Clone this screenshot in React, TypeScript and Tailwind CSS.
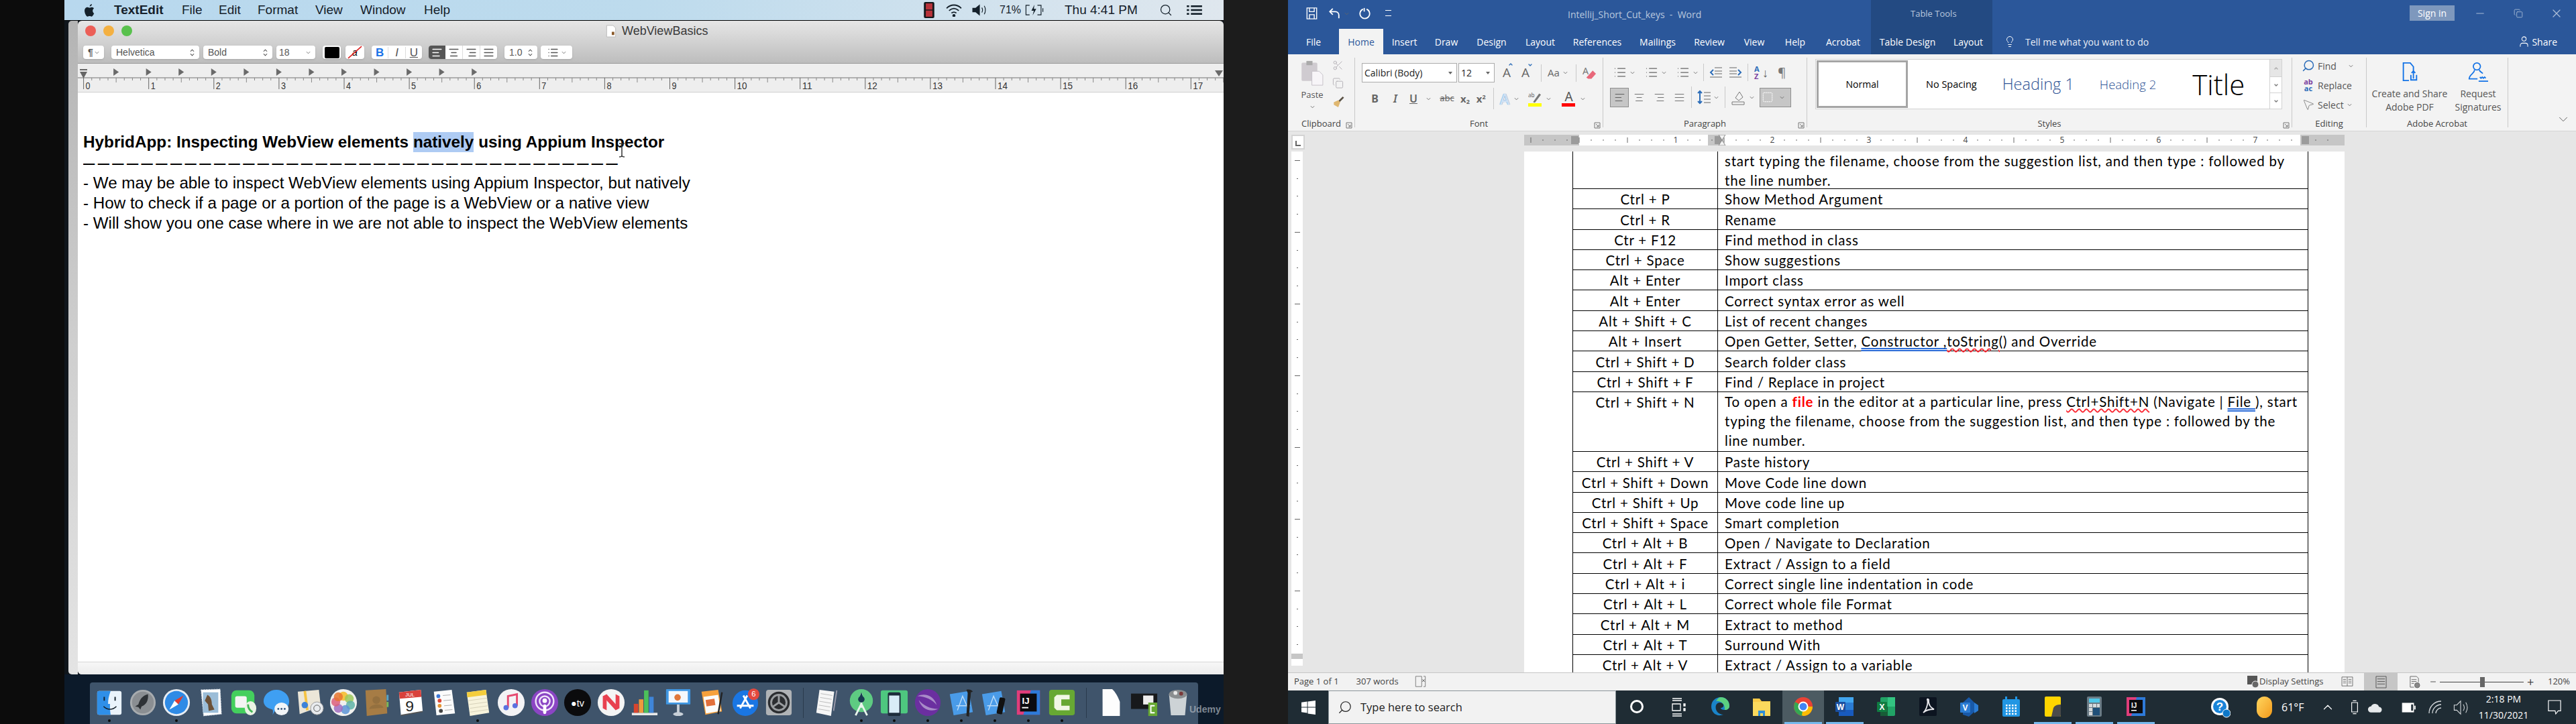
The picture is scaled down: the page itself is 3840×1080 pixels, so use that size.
import React from 'react';
import {
  AlignCenter, AlignJustify, AlignLeft, AlignRight, ChevronDown, ChevronUp, Copy, Lightbulb, List, Minus, MousePointer2,
  Scissors, Search, Square, User, X,
} from 'lucide-react';

const Caret = ({ className = '' }: { className?: string }) => (
  <svg viewBox="0 0 8 5" className={`w-[7px] h-[5px] ${className}`}><path d="M1 1l3 3 3-3" fill="none" stroke="#666" strokeWidth="1" /></svg>
);

const Updown = () => (
  <svg viewBox="0 0 8 14" className="w-[7px] h-[13px]"><path d="M1 5l3-3 3 3M1 9l3 3 3-3" fill="none" stroke="#444" strokeWidth="1.2" /></svg>
);

/* ---------- mac side ---------- */

const macMenu = [
  { label: 'TextEdit', cls: 'w-[101px] font-bold' },
  { label: 'File', cls: 'w-[55px]' },
  { label: 'Edit', cls: 'w-[58px]' },
  { label: 'Format', cls: 'w-[86px]' },
  { label: 'View', cls: 'w-[67px]' },
  { label: 'Window', cls: 'w-[95px]' },
  { label: 'Help', cls: 'w-[50px]' },
];

const MacMenuBar = () => (
  <div className="h-[31px] shrink-0 flex items-center border-b border-black bg-gradient-to-r from-[#b8d8ee] via-[#bddbed] to-[#dfe7ee] text-[#15202a] text-[19px] font-['Liberation_Sans',Arial,sans-serif]">
    <svg viewBox="0 0 20 24" className="ml-[28px] mr-[27px] w-[19px] h-[21px]" fill="#14202a">
      <path d="M14 1c.2 2-1.600 4.300-3.800 4.200C10 3.200 11.900 1.200 14 1zM17.500 17.500c-.9 2-2.300 5-4.200 5-1.300 0-1.800-.8-3.300-.8s-2 .8-3.300.8C4.500 22.500 1.500 17 1.500 12.500 1.500 9 3.800 6.500 6.500 6.500c1.500 0 2.600 1 3.500 1s2.300-1.100 4-1c1.300.1 2.700.7 3.500 2-3.200 1.900-2.600 6.900.5 9z" />
    </svg>
    {macMenu.map((m) => (
      <span key={m.label} className={m.cls}>{m.label}</span>
    ))}
    <div className="ml-[692px] flex items-center">
      <svg viewBox="0 0 22 34" className="w-[22px] h-[24px]">
        <rect width="22" height="34" rx="3" fill="#14181c" />
        <rect x="4" y="3" width="14" height="13" fill="#b8323a" />
        <rect x="4" y="18" width="14" height="13" fill="#b8323a" />
      </svg>
      <svg viewBox="0 0 28 22" className="ml-[12px] w-[28px] h-[20px]" fill="none" stroke="#14202a" strokeWidth="2">
        <path d="M2 8c7-7 17-7 24 0M6 12c5-4.500 11-4.500 16 0M10 16c2.500-2 5.500-2 8 0" />
        <circle cx="14" cy="20" r="1.500" fill="#14202a" />
      </svg>
      <svg viewBox="0 0 24 20" className="ml-[12px] w-[24px] h-[18px]" fill="none" stroke="#14202a" strokeWidth="1.300">
        <path d="M1 7h5l6-5v16l-6-5H1z" fill="#14202a" />
        <path d="M16 6c1.500 2.500 1.500 5.500 0 8M20 3c2.500 4 2.500 10 0 14" />
      </svg>
      <span className="ml-[18px] text-[16px] w-[34px]">71%</span>
      <svg viewBox="0 0 32 20" className="ml-[2px] w-[32px] h-[18px]" fill="none" stroke="#14202a" strokeWidth="1.300">
        <path d="M8 2H2v16h6M21 2h6v16h-6" />
        <path d="M30 7v6" />
        <path d="M16 1l-5 10h4l-2 8 6-11h-4z" fill="#14202a" stroke="none" />
      </svg>
      <span className="ml-[29px] w-[109px] whitespace-nowrap">Thu 4:41 PM</span>
      <Search className="ml-[31px] w-[22px] h-[20px] text-[#14202a]" strokeWidth={1.5} />
      <svg viewBox="0 0 26 16" className="ml-[19px] w-[25px] h-[14px]" fill="#14202a">
        <rect y="0" width="4" height="3" /><rect x="7" y="0" width="19" height="3" />
        <rect y="6.500" width="4" height="3" /><rect x="7" y="6.500" width="19" height="3" />
        <rect y="13" width="4" height="3" /><rect x="7" y="13" width="19" height="3" />
      </svg>
    </div>
  </div>
);

const MacRuler = () => {
  const zero = 8.6;
  const unit = 97.1;
  const ticks = Array.from({ length: 143 }, (_, i) => i);
  return (
    <svg width="1708" height="42" className="block">
      <line x1="0" y1="21" x2="1708" y2="21" stroke="#9b9b9b" strokeWidth="1.500" />
      {ticks.map((i) => {
        const x = zero + (i * unit) / 8;
        const major = i % 8 === 0;
        const half = i % 4 === 0;
        return <line key={i} x1={x} x2={x} y1="21" y2={major ? 38 : half ? 28 : 25} stroke={major ? '#666' : '#888'} strokeWidth="1" />;
      })}
      {Array.from({ length: 18 }, (_, i) => (
        <text key={i} x={zero + i * unit + 3} y="38" fontSize="15" fill="#333" fontFamily="'Liberation Sans'" textLength={i > 9 ? 15 : 7} lengthAdjust="spacingAndGlyphs">{i}</text>
      ))}
      <path d="M3 12h11l-5.500 10z M3 8h11v2H3z" fill="#666" />
      {Array.from({ length: 12 }, (_, i) => {
        const x = zero + ((i + 1) * unit) / 2 - 4;
        return <path key={i} d={`M${x} 7l8 5.500-8 5.500z`} fill="#6a6a6a" />;
      })}
      <path d="M1695 10h12l-6 9z" fill="#6a6a6a" />
    </svg>
  );
};

const MacToolbar = () => (
  <div className="h-[64px] shrink-0 flex flex-col bg-gradient-to-b from-[#e6e6e6] to-[#bdbdbd] border-b border-[#9a9a9a]">
    <div className="h-[30px] shrink-0 flex items-center pl-[11px]">
      <div className="flex gap-[11px]">
        <span className="w-4 h-4 rounded-full bg-[#ec5f57]" />
        <span className="w-4 h-4 rounded-full bg-[#f4b041]" />
        <span className="w-4 h-4 rounded-full bg-[#59c14d]" />
      </div>
      <svg viewBox="0 0 16 20" className="ml-[706px] w-[16px] h-[19px]"><path d="M1 1h10l4 4v14H1z" fill="#fff" stroke="#bbb" /><rect x="9" y="11" width="4" height="5" fill="#8a5a2a" /></svg>
      <span className="ml-[8px] text-[18px] text-[#3a3a3a]">WebViewBasics</span>
    </div>
    <div className="mt-[7px] h-[20px] flex items-stretch pl-[8px] text-[#555] text-[14px]">
      <div className="w-[31px] rounded-[4px] bg-white shadow-sm flex items-center justify-center gap-[2px] font-bold">¶<Caret /></div>
      <div className="ml-[11px] w-[131px] rounded-[4px] bg-white shadow-sm flex items-center justify-between px-[7px]">Helvetica<Updown /></div>
      <div className="ml-[6px] w-[103px] rounded-[4px] bg-white shadow-sm flex items-center justify-between px-[7px]">Bold<Updown /></div>
      <div className="ml-[6px] w-[58px] rounded-[4px] bg-white shadow-sm flex items-center justify-between px-[4px]">18<Caret className="mr-[3px]" /></div>
      <div className="ml-[11px] w-[27px] rounded-[4px] bg-white shadow-sm flex items-center justify-center"><span className="w-[22px] h-[17px] bg-black rounded-[2px]" /></div>
      <div className="ml-[7px] w-[28px] rounded-[4px] bg-white shadow-sm flex items-center justify-center relative text-black italic">a<svg viewBox="0 0 24 18" className="absolute inset-0 w-full h-full"><path d="M3 17L21 1" stroke="#d22" strokeWidth="1.500" /></svg></div>
      <div className="ml-[11px] w-[75px] rounded-[4px] bg-white shadow-sm flex items-center text-[17px] leading-none">
        <span className="flex-1 text-center font-bold text-[#1a73e8]">B</span>
        <span className="flex-1 text-center italic border-x border-[#ddd]">I</span>
        <span className="flex-1 text-center underline">U</span>
      </div>
      <div className="ml-[10px] w-[102px] rounded-[4px] bg-white shadow-sm flex items-stretch overflow-hidden">
        <span className="flex-1 flex items-center justify-center bg-[#555]"><AlignLeft className="w-[17px] h-[17px] text-white" /></span>
        <span className="flex-1 flex items-center justify-center border-r border-[#ddd]"><AlignCenter className="w-[17px] h-[17px]" /></span>
        <span className="flex-1 flex items-center justify-center border-r border-[#ddd]"><AlignRight className="w-[17px] h-[17px]" /></span>
        <span className="flex-1 flex items-center justify-center"><AlignJustify className="w-[17px] h-[17px]" /></span>
      </div>
      <div className="ml-[11px] w-[49px] rounded-[4px] bg-white shadow-sm flex items-center justify-between px-[7px]">1.0<Updown /></div>
      <div className="ml-[5px] w-[47px] rounded-[4px] bg-white shadow-sm flex items-center justify-center gap-[4px]"><List className="w-[17px] h-[17px]" /><Caret /></div>
    </div>
  </div>
);

const dash = Array.from({ length: 37 }, () => '–').join(' ');

const MacDocument = () => (
  <div className="flex-1 relative bg-white text-black text-[24.200px] font-['Liberation_Sans',Arial,sans-serif] pl-[8px] pt-[59px]">
    <div className="h-[30px] leading-[30px] font-bold text-[24.300px] whitespace-nowrap">
      HybridApp: Inspecting WebView elements <span className="bg-[#aecbf3] inline-block h-[30px]">natively</span> using Appium Inspector
    </div>
    <div className="h-[31px] leading-[31px] text-[31px] tracking-[-2.100px] whitespace-nowrap overflow-hidden">{dash}</div>
    <div className="h-[30px] leading-[30px] whitespace-nowrap">- We may be able to inspect WebView elements using Appium Inspector, but natively</div>
    <div className="h-[30px] leading-[30px] whitespace-nowrap">- How to check if a page or a portion of the page is a WebView or a native view</div>
    <div className="h-[30px] leading-[30px] whitespace-nowrap">- Will show you one case where in we are not able to inspect the WebView elements</div>
    <svg viewBox="0 0 10 22" className="absolute left-[806px] top-[75px] w-[10px] h-[22px]" fill="none" stroke="#333" strokeWidth="1.500"><path d="M1 1c2 0 4 .5 4 2v16c0 1.500-2 2-4 2M9 1c-2 0-4 .5-4 2M9 21c-2 0-4-.5-4-2" /></svg>
    <div className="absolute left-0 right-0 bottom-0 h-[19px] border-t border-[#d6d6d6] bg-gradient-to-b from-[#f7f7f7] to-[#ececec]" />
  </div>
);

const DOCK = 'block w-[42px] h-[42px]';

const dockLeft: { node: React.ReactNode; dot?: boolean }[] = [
  { dot: true, node: <svg viewBox="0 0 44 44" className={DOCK}><rect x="3" y="4" width="38" height="37" rx="3" fill="#eaf3fb" /><path d="M3 7a3 3 0 013-3h18c-3 8-4 14-4 20h3c0 6 0 11 1 17H6a3 3 0 01-3-3z" fill="#2f8fe8" /><path d="M13 28c6 6 14 6 20 0" stroke="#15202a" strokeWidth="1.600" fill="none" /><path d="M14 13v6M31 13v6" stroke="#15202a" strokeWidth="2" /></svg> },
  { node: <svg viewBox="0 0 44 44" className={DOCK}><circle cx="22" cy="22" r="20" fill="#a8acaf" /><circle cx="22" cy="22" r="17" fill="#8a8e92" /><path d="M30 9c-9 2-13 9-15 16l-5 3 5 1 3 4 2-5c7-2 11-9 10-19z" fill="#2e3236" /></svg> },
  { dot: true, node: <svg viewBox="0 0 44 44" className={DOCK}><circle cx="22" cy="22" r="21" fill="#e8edf3" /><circle cx="22" cy="22" r="18" fill="#2f8be6" /><path d="M33 11L19 19l6 6z" fill="#e23c30" /><path d="M11 33l8-14 6 6z" fill="#fff" /></svg> },
  { node: <svg viewBox="0 0 44 44" className={DOCK}><path d="M8 2l30 -1 2 39-28 3z" fill="#fff" stroke="#c5d0dc" strokeDasharray="2 2" /><rect x="11" y="6" width="24" height="32" fill="#9bbdd8" /><path d="M18 10c6 3 7 10 7 15l4 8-9 2-1-10-5-6z" fill="#6b5138" /></svg> },
  { node: <svg viewBox="0 0 44 44" className={DOCK}><rect x="3" y="3" width="36" height="36" rx="8" fill="#44cf5d" /><rect x="9" y="12" width="18" height="18" rx="3" fill="#f4f4f4" /><ellipse cx="33" cy="31" rx="9" ry="11" fill="#e9f2e4" /><path d="M29 25c0 6 2 9 7 12" stroke="#43b456" strokeWidth="3" fill="none" /></svg> },
  { node: <svg viewBox="0 0 44 44" className={DOCK}><path d="M22 2c11 0 20 8 20 18 0 3-1 6-2 8H24l-8 13c1-3 1-6 0-8C7 31 2 26 2 20 2 10 11 2 22 2z" fill="#3f9ff2" /><ellipse cx="30" cy="32" rx="11" ry="10" fill="#f2f5f8" /><circle cx="25" cy="32" r="1.500" fill="#3a5a80" /><circle cx="30" cy="32" r="1.500" fill="#3a5a80" /><circle cx="35" cy="32" r="1.500" fill="#3a5a80" /></svg> },
  { node: <svg viewBox="0 0 44 44" className={DOCK}><path d="M3 5l33-3 3 26-33 12z" fill="#ebe6d8" /><path d="M14 4l4 30" stroke="#f5c343" strokeWidth="4" /><circle cx="14" cy="26" r="5" fill="#3d82d8" /><circle cx="33" cy="31" r="10" fill="#e9ecef" stroke="#999" /><circle cx="33" cy="31" r="5" fill="none" stroke="#555" /></svg> },
  { node: <svg viewBox="0 0 44 44" className={DOCK}><circle cx="22" cy="22" r="21" fill="#f0f0ee" /><circle cx="22" cy="12" r="7" fill="#f6c343" /><circle cx="31" cy="16" r="7" fill="#9cc95a" opacity=".85" /><circle cx="33" cy="26" r="7" fill="#5fb3a8" opacity=".85" /><circle cx="25" cy="33" r="7" fill="#5c94d6" opacity=".85" /><circle cx="14" cy="31" r="7" fill="#a06cc0" opacity=".85" /><circle cx="10" cy="21" r="7" fill="#dd5f7a" opacity=".85" /><circle cx="14" cy="13" r="7" fill="#e8762f" opacity=".85" /></svg> },
  { node: <svg viewBox="0 0 44 44" className={DOCK}><path d="M4 3l32-2 2 38-32 4z" fill="#a67c45" /><circle cx="21" cy="18" r="6" fill="#94703f" /><path d="M10 32c2-9 20-9 22-2z" fill="#94703f" /><rect x="37" y="10" width="3" height="9" fill="#58a5c7" /><rect x="37" y="21" width="3" height="8" fill="#7cb85a" /></svg> },
  { node: <svg viewBox="0 0 44 44" className={DOCK}><path d="M4 6l34-4 3 34-34 6z" fill="#fff" /><path d="M4 6l34-4 1 11-34 3z" fill="#d9413b" /><text x="14" y="13" fontSize="8" fill="#fff" fontFamily="'Liberation Sans'">JUL</text><text x="14" y="36" fontSize="24" fill="#222" fontFamily="'Liberation Sans'">9</text><path d="M7 42l34-6" stroke="#555" strokeWidth="2" /></svg> },
  { node: <svg viewBox="0 0 44 44" className={DOCK}><path d="M6 5l28-3 5 37-29 3z" fill="#fbfbfb" /><circle cx="13" cy="12" r="3" fill="#3d78d8" /><circle cx="15" cy="19" r="3" fill="#dc4a3c" /><circle cx="15" cy="27" r="3" fill="#e59434" /><circle cx="17" cy="35" r="3" fill="#444" /><path d="M20 11l12-1M21 19l12-1M22 27l12-1M23 34l12-1" stroke="#aaa" strokeWidth="1" /></svg> },
  { dot: true, node: <svg viewBox="0 0 44 44" className={DOCK}><path d="M5 6l30-4 5 36-30 5z" fill="#f7f3dc" /><path d="M5 6l30-4 1 8-30 4z" fill="#f4cd3c" /><path d="M8 19l29-4M9 25l29-4M10 31l28-4M10 37l28-4" stroke="#d5d0b8" strokeWidth="1" /></svg> },
  { node: <svg viewBox="0 0 44 44" className={DOCK}><circle cx="22" cy="22" r="21" fill="#f3f3f5" /><path d="M17 30V12l14-3v18" fill="none" stroke="#e64a70" strokeWidth="3" /><circle cx="14" cy="30" r="4" fill="#5a72e0" /><circle cx="28" cy="27" r="4" fill="#5a72e0" /></svg> },
  { node: <svg viewBox="0 0 44 44" className={DOCK}><circle cx="22" cy="22" r="21" fill="#8b45c4" /><g fill="none" stroke="#f0e4fa" strokeWidth="2.500"><circle cx="22" cy="20" r="14" /><circle cx="22" cy="20" r="8" /></g><circle cx="22" cy="19" r="3.500" fill="#fff" /><rect x="19.500" y="25" width="5" height="15" rx="2.500" fill="#fff" /></svg> },
  { node: <svg viewBox="0 0 44 44" className={DOCK}><circle cx="22" cy="22" r="21" fill="#0b0b0d" /><text x="22" y="28" textAnchor="middle" fontSize="15" fill="#fff" fontFamily="'Liberation Sans'">●tv</text></svg> },
  { node: <svg viewBox="0 0 44 44" className={DOCK}><circle cx="22" cy="22" r="21" fill="#f4f4f4" /><path d="M9 12l6-3 20 22-6 3z" fill="#e8414f" /><path d="M9 12h6v22l-6-3zM29 9l6 3v19l-6-3z" fill="#e8414f" /></svg> },
  { node: <svg viewBox="0 0 44 44" className={DOCK}><path d="M2 38h40v4H2z" fill="#e8e8e8" /><rect x="5" y="24" width="7" height="14" fill="#d8452e" /><rect x="13" y="17" width="7" height="21" fill="#ef9a3d" /><rect x="21" y="3" width="7" height="35" fill="#4cc05a" /><rect x="29" y="13" width="7" height="25" fill="#3f85d8" /></svg> },
  { node: <svg viewBox="0 0 44 44" className={DOCK}><rect x="3" y="1" width="38" height="24" rx="1" fill="#3f97e3" /><rect x="7" y="4" width="30" height="18" fill="#f4f8fc" /><circle cx="21" cy="14" r="5" fill="#e0773a" /><rect x="20" y="25" width="4" height="14" fill="#c8d0d8" /><ellipse cx="22" cy="40" rx="8" ry="3" fill="#c8d0d8" /></svg> },
  { node: <svg viewBox="0 0 44 44" className={DOCK}><path d="M6 5l26-3 6 34-26 5z" fill="#f7a13c" /><path d="M9 13l23-3 4 25-23 4z" fill="#fbfbfb" /><rect x="13" y="17" width="14" height="10" fill="#e26f3b" transform="rotate(-9 20 22)" /><path d="M38 6l-6 34" stroke="#222" strokeWidth="2.500" /></svg> },
  { node: <svg viewBox="0 0 44 44" className="block w-[42px] h-[42px]"><circle cx="22" cy="23" r="20" fill="#1a76e3" /><path d="M14 31L25 11M30 31L19 11M9 27h26" stroke="#fff" strokeWidth="3" /><circle cx="35" cy="9" r="9" fill="#e2483e" /><text x="35" y="13" textAnchor="middle" fontSize="12" fill="#fff" fontFamily="'Liberation Sans'">6</text></svg> },
  { node: <svg viewBox="0 0 44 44" className={DOCK}><rect x="2" y="2" width="40" height="40" rx="4" fill="#b0b3b6" /><circle cx="22" cy="22" r="17" fill="#2b2d30" /><circle cx="22" cy="22" r="12" fill="none" stroke="#9a9da0" strokeWidth="3" /><path d="M22 22V10M22 22l10 7M22 22l-10 7" stroke="#9a9da0" strokeWidth="3" /></svg> },
];

const dockMiddle: { node: React.ReactNode; dot?: boolean }[] = [
  { dot: false, node: <svg viewBox="0 0 44 44" className={DOCK}><path d="M9 2l23 3-5 38L4 38z" fill="#f6f6f6" /><path d="M11 8l18 3M10 14l18 3M9 20l18 3M8 26l18 3M7 32l18 3" stroke="#bbb" strokeWidth="1" /><path d="M36 3l-5 32" stroke="#99a" strokeWidth="2" /></svg> },
  { dot: true, node: <svg viewBox="0 0 44 44" className={DOCK}><circle cx="22" cy="19" r="18" fill="#5ecb82" /><path d="M22 8v22M13 42l9-18 9 18" stroke="#e8f4ec" strokeWidth="3" fill="none" /><circle cx="22" cy="17" r="5" fill="#183a50" /><path d="M22 6l-4 11h8z" fill="#183a50" /></svg> },
  { dot: true, node: <svg viewBox="0 0 44 44" className={DOCK}><rect x="1" y="3" width="42" height="36" rx="3" fill="#4ec77f" /><rect x="12" y="6" width="20" height="37" rx="3" fill="#1d2d3c" /><rect x="14" y="11" width="16" height="27" fill="#d8ecf7" /></svg> },
  { dot: true, node: <svg viewBox="0 0 44 44" className={DOCK}><ellipse cx="22" cy="22" rx="20" ry="21" fill="#6b2fa0" /><path d="M6 12c12-6 26 0 30 14-6-8-18-14-30-14zM38 32c-12 6-26 0-30-14 6 8 18 14 30 14z" fill="#a98cc9" /></svg> },
  { dot: true, node: <svg viewBox="0 0 44 44" className={DOCK}><path d="M4 9l30-5 6 33-30 5z" fill="#4a9be8" /><path d="M16 34L24 12l8 18M14 27h22" stroke="#bcdcf8" strokeWidth="1.500" fill="none" /><path d="M30 2c4-1 8 0 10 3l-3 1-3 38-4-1 2-36z" fill="#222" /></svg> },
  { dot: true, node: <svg viewBox="0 0 44 44" className={DOCK}><path d="M2 9l30-5 6 33-30 5z" fill="#4a9be8" /><path d="M12 34L20 12l8 18M10 27h22" stroke="#bcdcf8" strokeWidth="1.500" fill="none" /><rect x="27" y="14" width="9" height="26" rx="2" fill="#111" transform="rotate(12 31 27)" /></svg> },
  { dot: true, node: <svg viewBox="0 0 44 44" className={DOCK}><rect x="4" y="3" width="36" height="38" fill="#e03d7a" /><path d="M26 3h14v38H14z" fill="#2e7ad8" /><rect x="9" y="8" width="26" height="28" fill="#0b0b0f" /><text x="12" y="24" fontSize="14" fontWeight="700" fill="#fff" fontFamily="'Liberation Sans'">IJ</text><rect x="12" y="29" width="10" height="2" fill="#fff" /></svg> },
  { dot: true, node: <svg viewBox="0 0 44 44" className={DOCK}><rect x="2" y="2" width="40" height="40" rx="4" fill="#67a833" /><path d="M14 10h20v7H21v10h13v7H14l-4-4V14z" fill="#f1f7e6" /></svg> },
];

const dockRight: { node: React.ReactNode }[] = [
  { node: <svg viewBox="0 0 44 44" className={DOCK}><path d="M9 1h15c5 4 10 14 12 20v22H9z" fill="#fdfdfd" /></svg> },
  { node: <svg viewBox="0 0 44 44" className={DOCK}><rect x="1" y="8" width="41" height="24" fill="#17191b" /><rect x="20" y="11" width="16" height="14" fill="#eee" /><rect x="28" y="22" width="14" height="21" fill="#67a833" /><path d="M38 27h-6v11h6" stroke="#fff" strokeWidth="2" fill="none" /></svg> },
  { node: <svg viewBox="0 0 44 44" className={DOCK}><path d="M8 9h28l-3 33H11z" fill="#cdd3d6" /><ellipse cx="22" cy="9" rx="14" ry="7" fill="#8a8e90" /><circle cx="18" cy="7" r="3" fill="#e8e8e8" /><circle cx="27" cy="8" r="3" fill="#7a3a3a" /></svg> },
];

const DockItem = ({ node, dot }: { node: React.ReactNode; dot?: boolean }) => (
  <div className="w-[49.900px] flex flex-col items-center pt-[9px]">
    {node}
    <span className={`mt-[4px] w-[4px] h-[4px] rounded-full ${dot ? 'bg-[#0b0b0b]' : 'bg-transparent'}`} />
  </div>
);

const DockSep = () => (
  <div className="w-[23px] flex justify-center pt-[8px]"><span className="w-px h-[45px] bg-[#2a3a4c]" /></div>
);

const Dock = () => (
  <div className="h-[74px] shrink-0 relative bg-[#0c1a2a] pl-[38px] pt-[12px]">
    <div className="w-[1652px] h-[62px] flex pl-[4px] rounded-t-[4px] bg-[#3f546b]">
      {dockLeft.map((d, i) => <DockItem key={i} {...d} />)}
      <DockSep />
      {dockMiddle.map((d, i) => <DockItem key={i} {...d} />)}
      <DockSep />
      {dockRight.map((d, i) => <DockItem key={i} {...d} />)}
    </div>
    <span className="absolute left-[1677px] top-[42px] text-[14px] font-bold text-[#aeb6be] opacity-70">Udemy</span>
  </div>
);

const MacSide = () => (
  <div className="w-[1728px] shrink-0 h-full flex flex-col font-['Liberation_Sans',Arial,sans-serif]">
    <MacMenuBar />
    <div className="flex-1 min-h-0 flex bg-[#10161c]">
      <div className="w-[6px] shrink-0" />
      <div className="w-[14px] shrink-0 rounded-tl-[5px] rounded-bl-[5px] bg-gradient-to-b from-[#b4b4b4] via-[#cfcfcf] to-[#e4e4e4]" />
      <div className="flex-1 flex flex-col rounded-t-[6px] rounded-bl-[6px] overflow-hidden">
        <MacToolbar />
        <div className="h-[43px] shrink-0 bg-[#eeeeee] border-b border-[#cfcfcf]"><MacRuler /></div>
        <MacDocument />
      </div>
    </div>
    <Dock />
  </div>
);

/* ---------- word side ---------- */

const wordTabs = [
  { label: 'File', cls: 'w-[76px] text-white' },
  { label: 'Home', cls: 'w-[66px] bg-[#f3f3f3] text-[#2b579a]' },
  { label: 'Insert', cls: 'w-[63px] text-white' },
  { label: 'Draw', cls: 'w-[62px] text-white' },
  { label: 'Design', cls: 'w-[73px] text-white' },
  { label: 'Layout', cls: 'w-[72px] text-white' },
  { label: 'References', cls: 'w-[98px] text-white' },
  { label: 'Mailings', cls: 'w-[82px] text-white' },
  { label: 'Review', cls: 'w-[72px] text-white' },
  { label: 'View', cls: 'w-[62px] text-white' },
  { label: 'Help', cls: 'w-[60px] text-white' },
  { label: 'Acrobat', cls: 'w-[83px] text-white' },
  { label: 'Table Design', cls: 'w-[109px] text-white bg-[#234a82]' },
  { label: 'Layout', cls: 'w-[72px] text-white bg-[#234a82]' },
];

const WordTitleBar = () => (
  <div className="h-[43px] shrink-0 flex items-start bg-[#2b579a] text-[#b9c8de] text-[14px] relative">
    <svg viewBox="0 0 18 20" className="ml-[27px] mt-[11px] w-[17px] h-[18px]" fill="none" stroke="#fff" strokeWidth="1.500"><path d="M1 1h16v18H1z" /><path d="M5 1v6h8V1M5 19v-7h8v7" /></svg>
    <svg viewBox="0 0 20 20" className="ml-[16px] mt-[11px] w-[19px] h-[18px]" fill="none" stroke="#fff" strokeWidth="2"><path d="M7 2L2 7l5 5" /><path d="M2 7h9c4 0 6 3 6 6v5" /></svg>
    <Caret className="ml-[5px] mt-[18px]" />
    <svg viewBox="0 0 20 20" className="ml-[14px] mt-[11px] w-[19px] h-[18px]" fill="none" stroke="#fff" strokeWidth="2"><path d="M13 3a8 8 0 11-6 0" /><path d="M9 1v6" /></svg>
    <span className="ml-[21px] mt-[15px] w-[9px] h-[9px] border-t border-b border-white" />
    <span className="absolute left-[417px] top-[11px] text-[14px] whitespace-pre">Intellij_Short_Cut_keys  -  Word</span>
    <div className="absolute left-[869px] top-0 w-[181px] h-[43px] bg-[#234a82] flex pl-[59px] pt-[11px] text-[13px]">Table Tools</div>
    <span className="absolute left-[1672px] top-[8px] w-[67px] h-[23px] bg-[#7e98bd] flex items-center justify-center text-white text-[14px]">Sign in</span>
    <Minus className="absolute left-[1768px] top-[11px] w-[18px] h-[18px] text-[#a9bbd6]" strokeWidth={1.500} />
    <Copy className="absolute left-[1827px] top-[12px] w-[14px] h-[16px] text-[#a9bbd6]" strokeWidth={1.500} />
    <X className="absolute left-[1881px] top-[10px] w-[20px] h-[20px] text-[#a9bbd6]" strokeWidth={1.500} />
  </div>
);

const WordTabs = () => (
  <div className="h-[38px] shrink-0 flex items-stretch bg-[#2b579a] text-[14px]">
    {wordTabs.map((t, i) => (
      <div key={i} className={`flex items-center justify-center ${t.cls}`}>{t.label}</div>
    ))}
    <Lightbulb className="ml-[17px] self-center w-[18px] h-[22px] text-white" strokeWidth={1.300} />
    <span className="ml-[14px] self-center text-[14px] text-[#e9eef6]">Tell me what you want to do</span>
    <div className="ml-auto mr-[28px] self-center flex items-center text-white gap-[2px]">
      <User className="w-[19px] h-[22px]" strokeWidth={1.300} />
      <span>Share</span>
    </div>
  </div>
);

const GroupLabel = ({ children, launcher }: { children: React.ReactNode; launcher?: boolean }) => (
  <div className="absolute left-0 right-0 -bottom-[5px] h-[20px] flex items-center justify-center text-[13px] text-[#444]">
    {children}
    {launcher && (
      <svg viewBox="0 0 10 10" className="absolute right-[3px] bottom-[3px] w-[10px] h-[10px]" fill="none" stroke="#777"><path d="M1 1h8v8H1zM3 3l4 4M7 4v3H4" /></svg>
    )}
  </div>
);

const RibbonGroup = ({ cls, children }: { cls: string; children: React.ReactNode }) => (
  <div className={`relative shrink-0 h-[104px] mt-[5px] border-r border-[#c9c9c9] ${cls}`}>{children}</div>
);

const A = ({ className = '' }: { className?: string }) => <span className={`text-[19px] leading-none ${className}`}>A</span>;

const ClipboardGroup = () => (
  <RibbonGroup cls="w-[100px]">
    <div className="flex">
      <div className="ml-[15px] w-[42px] flex flex-col items-center pt-[4px]">
        <svg viewBox="0 0 38 42" className="w-[37px] h-[38px]"><rect x="1" y="4" width="26" height="30" rx="2" fill="#cfcbd0" /><rect x="9" y="1" width="10" height="7" fill="#aaa" /><path d="M18 18h12l6 6v17H18z" fill="#f7f5f8" stroke="#c3bfc6" /></svg>
        <span className="text-[13px] mt-[4px] text-[#555]">Paste</span>
        <Caret className="mt-[5px]" />
      </div>
      <div className="ml-[7px] flex flex-col items-center gap-[9px] pt-[3px] text-[#b1adb3]">
        <Scissors className="w-[17px] h-[17px]" strokeWidth={1.300} />
        <Copy className="w-[17px] h-[18px]" strokeWidth={1.300} />
        <svg viewBox="0 0 20 20" className="w-[20px] h-[19px]"><path d="M11 9l7-7 2 2-7 7z" fill="#5a5245" /><path d="M4 11l7-3 3 3-3 8-7-4z" fill="#dfb770" /></svg>
      </div>
    </div>
    <GroupLabel launcher>Clipboard</GroupLabel>
  </RibbonGroup>
);

const FontGroup = () => (
  <RibbonGroup cls="w-[370px]">
    <div className="flex items-center h-[29px] mt-[8px] ml-[10px] text-[#666]">
      <div className="w-[142px] h-[29px] bg-white border border-[#ababab] flex items-center justify-between pl-[3px] pr-[6px] text-[14px] text-[#222]">Calibri (Body)<span className="w-0 h-0 border-x-[3px] border-x-transparent border-t-[4px] border-t-[#666]" /></div>
      <div className="ml-[2px] w-[54px] h-[29px] bg-white border border-[#ababab] flex items-center justify-between pl-[3px] pr-[6px] text-[14px] text-[#222]">12<span className="w-0 h-0 border-x-[3px] border-x-transparent border-t-[4px] border-t-[#666]" /></div>
      <span className="ml-[12px] relative"><A /><ChevronUp className="absolute -right-[4px] -top-[5px] w-[8px] h-[8px] text-[#2b6cb8]" strokeWidth={4} /></span>
      <span className="ml-[16px] relative"><A className="text-[17px]" /><ChevronDown className="absolute -right-[5px] -top-[4px] w-[8px] h-[8px] text-[#2b6cb8]" strokeWidth={4} /></span>
      <span className="ml-[17px] w-px h-[26px] bg-[#c9c9c9]" />
      <span className="ml-[9px] text-[15px]">Aa</span><Caret className="ml-[5px]" />
      <span className="ml-[12px] w-px h-[26px] bg-[#c9c9c9]" />
      <svg viewBox="0 0 22 24" className="ml-[9px] w-[21px] h-[24px]"><text x="0" y="14" fontSize="15" fill="#777" fontFamily="'Noto Sans'">A</text><path d="M6 19l10-11 5 5-7 8H9z" fill="#e8687a" /></svg>
    </div>
    <div className="flex items-center h-[30px] mt-[9px] ml-[16px] text-[#666] text-[16px] font-['Noto_Sans',sans-serif]">
      <span className="w-[27px] text-center font-bold">B</span>
      <span className="ml-[4px] w-[26px] text-center italic font-semibold">I</span>
      <span className="ml-[4px] w-[20px] text-center underline font-semibold">U</span>
      <Caret className="ml-[9px]" />
      <span className="ml-[12px] w-[24px] text-center text-[13px] line-through">abc</span>
      <span className="ml-[8px] text-[15px] font-bold">x<sub className="text-[9px]">2</sub></span>
      <span className="ml-[10px] text-[15px] font-bold">x<sup className="text-[9px]">2</sup></span>
      <span className="ml-[11px] w-px h-[32px] bg-[#c9c9c9]" />
      <span className="ml-[9px] text-[22px] leading-none font-semibold text-[#cfe1f5] [text-shadow:0_0_1px_#2b6cb8]">A</span>
      <Caret className="ml-[7px]" />
      <span className="ml-[14px] flex flex-col items-center">
        <svg viewBox="0 0 22 18" className="w-[20px] h-[18px]"><text x="0" y="9" fontSize="9" fill="#666" fontFamily="'Noto Sans'">ab</text><path d="M8 17l10-14 3 2-10 13z" fill="#777" /></svg>
        <span className="w-[20px] h-[5px] bg-[#ffff00]" />
      </span>
      <Caret className="ml-[7px]" />
      <span className="ml-[16px] flex flex-col items-center leading-none">
        <span className="text-[19px] text-[#555]">A</span>
        <span className="w-[20px] h-[5px] bg-[#ff0000]" />
      </span>
      <Caret className="ml-[8px]" />
    </div>
    <GroupLabel launcher>Font</GroupLabel>
  </RibbonGroup>
);

const ParagraphGroup = () => (
  <RibbonGroup cls="w-[304px]">
    <div className="flex items-center h-[30px] mt-[7px] ml-[14px]">
      <List className="w-[22px] h-[20px] text-[#666]" strokeWidth={1.500} /><Caret className="ml-[4px]" />
      <List className="ml-[14px] w-[22px] h-[20px] text-[#666]" strokeWidth={1.500} /><Caret className="ml-[4px]" />
      <List className="ml-[14px] w-[22px] h-[20px] text-[#666]" strokeWidth={1.500} /><Caret className="ml-[4px]" />
      <span className="ml-[8px] w-px h-[26px] bg-[#c9c9c9]" />
      <svg viewBox="0 0 20 18" className="ml-[8px] w-[20px] h-[18px]" fill="none" stroke="#666"><path d="M8 2h11M8 7h11M8 11h11M1 16h18" /><path d="M6 5L2 9l4 4" stroke="#2b6cb8" strokeWidth="2" /></svg>
      <svg viewBox="0 0 20 18" className="ml-[9px] w-[20px] h-[18px]" fill="none" stroke="#666"><path d="M1 2h11M1 7h11M1 11h11M1 16h18" /><path d="M14 5l4 4-4 4" stroke="#2b6cb8" strokeWidth="2" /></svg>
      <span className="ml-[8px] w-px h-[26px] bg-[#c9c9c9]" />
      <span className="ml-[9px] flex flex-col text-[11px] leading-[11px] font-bold w-[12px]"><span className="text-[#2b6cb8]">A</span><span className="text-[#7a3fa0]">Z</span></span>
      <span className="text-[#666] text-[18px] leading-none">↓</span>
      <span className="ml-[14px] text-[19px] leading-none text-[#777]">¶</span>
    </div>
    <div className="flex items-center h-[30px] mt-[7px] ml-[10px]">
      <span className="w-[28px] h-[29px] flex items-center justify-center bg-[#c6c6c6] border border-[#8f8f8f]"><AlignLeft className="w-[17px] h-[17px] text-[#555]" strokeWidth={1.300} /></span>
      <AlignCenter className="ml-[7px] w-[17px] h-[17px] text-[#666]" strokeWidth={1.300} />
      <AlignRight className="ml-[13px] w-[17px] h-[17px] text-[#666]" strokeWidth={1.300} />
      <AlignJustify className="ml-[13px] w-[17px] h-[17px] text-[#666]" strokeWidth={1.300} />
      <span className="ml-[9px] w-px h-[32px] bg-[#c9c9c9]" />
      <svg viewBox="0 0 20 22" className="ml-[8px] w-[20px] h-[22px]" fill="none" stroke="#666"><path d="M4 2v18" stroke="#2b6cb8" strokeWidth="2" /><path d="M1 5l3-3 3 3M1 17l3 3 3-3" stroke="#2b6cb8" strokeWidth="2" /><path d="M10 4h10M10 9h10M10 14h10M10 19h10" /></svg>
      <Caret className="ml-[5px]" />
      <span className="ml-[9px] w-px h-[32px] bg-[#c9c9c9]" />
      <svg viewBox="0 0 20 24" className="ml-[9px] w-[20px] h-[24px]" fill="none" stroke="#777"><path d="M6 13l6-9 5 8-6 5z" /><path d="M1 19h18v4H1z" /></svg>
      <Caret className="ml-[7px]" />
      <span className="ml-[8px] w-[47px] h-[29px] flex items-center pl-[2px] gap-[9px] bg-[#c6c6c6] border border-[#8f8f8f]">
        <Square className="w-[18px] h-[18px] text-white" strokeWidth={1.300} strokeDasharray="2 2" />
        <Caret />
      </span>
    </div>
    <GroupLabel launcher>Paragraph</GroupLabel>
  </RibbonGroup>
);

const StylesGroup = () => (
  <RibbonGroup cls="w-[723px]">
    <div className="absolute left-[12px] top-[2px] w-[696px] h-[75px] bg-white border border-[#d2d2d2] flex font-['Open_Sans',sans-serif]">
      <div className="ml-[1px] mt-[1px] w-[136px] h-[71px] border-[3px] border-[#a5a5a5] flex items-center justify-center text-[14px] text-black">Normal</div>
      <span className="ml-[27px] self-center text-[14.500px] text-black whitespace-nowrap">No Spacing</span>
      <span className="ml-[38px] self-center text-[23.500px] font-light text-[#2f5496] whitespace-nowrap">Heading 1</span>
      <span className="ml-[38px] self-center text-[18.500px] font-light text-[#2f5496] whitespace-nowrap">Heading 2</span>
      <span className="ml-[54px] self-center text-[42px] leading-none font-light text-black">Title</span>
      <div className="ml-auto w-[18px] flex flex-col border-l border-[#d2d2d2]">
        <span className="h-[26px] bg-[#e6e6e6] flex items-center justify-center border-b border-[#d2d2d2]"><ChevronUp className="w-[8px] h-[8px] text-[#aaa]" strokeWidth={4} /></span>
        <span className="h-[24px] flex items-center justify-center border-b border-[#d2d2d2]"><ChevronDown className="w-[8px] h-[8px] text-[#777]" strokeWidth={4} /></span>
        <span className="flex-1 flex items-center justify-center"><ChevronDown className="w-[8px] h-[8px] text-[#777]" strokeWidth={4} /></span>
      </div>
    </div>
    <GroupLabel launcher>Styles</GroupLabel>
  </RibbonGroup>
);

const EditingGroup = () => (
  <RibbonGroup cls="w-[111px]">
    <div className="flex flex-col pl-[14px] pt-[2px] gap-[9px] text-[14px] text-[#555]">
      <div className="h-[20px] flex items-center gap-[4px]"><Search className="w-[20px] h-[20px] text-[#2b6cb8] -scale-x-100" strokeWidth={1.800} />Find<Caret className="ml-[14px]" /></div>
      <div className="h-[20px] flex items-center gap-[4px]"><span className="w-[20px] text-[11px] leading-[10px] font-bold text-[#2b6cb8] flex flex-col items-center"><span className="text-[#7a3fa0]">ab</span><span>ac</span></span>Replace</div>
      <div className="h-[20px] flex items-center gap-[4px]"><MousePointer2 className="w-[20px] h-[20px] text-[#777]" strokeWidth={1} />Select<Caret className="ml-[1px]" /></div>
    </div>
    <GroupLabel>Editing</GroupLabel>
  </RibbonGroup>
);

const AcrobatGroup = () => (
  <RibbonGroup cls="w-[211px]">
    <div className="flex justify-center gap-[6px] text-[14px] leading-[20px] text-[#555] text-center">
      <div className="w-[116px] flex flex-col items-center">
        <svg viewBox="0 0 24 32" className="mt-[6px] h-[30px] w-[24px]" fill="none" stroke="#1473e6" strokeWidth="2"><path d="M11 30H2V2h11l5 6v8" /><path d="M14 21v8h9v-8M18 27v-12M15 18l3-3 3 3" /></svg>
        <span className="mt-[8px] whitespace-nowrap">Create and Share</span>
        <span className="whitespace-nowrap">Adobe PDF</span>
      </div>
      <div className="w-[76px] flex flex-col items-center">
        <svg viewBox="0 0 34 34" className="mt-[6px] h-[30px] w-[32px]" fill="none" stroke="#1473e6" strokeWidth="2"><circle cx="15" cy="8" r="6" /><path d="M11 14c0 6-9 8-9 15h14M19 14c1 3 4 4 6 6" /><path d="M20 26l2 2 2-2 2 2 2-2 2 2" /><path d="M18 33h16" /></svg>
        <span className="mt-[8px]">Request</span>
        <span>Signatures</span>
      </div>
    </div>
    <GroupLabel>Adobe Acrobat</GroupLabel>
  </RibbonGroup>
);

const Ribbon = () => (
  <div className="h-[115px] shrink-0 flex bg-[#f3f3f3] border-b border-[#d4d4d4] relative font-['Open_Sans',sans-serif]">
    <ClipboardGroup />
    <FontGroup />
    <ParagraphGroup />
    <StylesGroup />
    <EditingGroup />
    <AcrobatGroup />
    <ChevronDown className="absolute right-[8px] top-[86px] w-[22px] h-[22px] text-[#555]" strokeWidth={1} />
  </div>
);

const WordRuler = () => {
  const zero = 82;
  const cells = Array.from({ length: 67 }, (_, i) => i - 4);
  return (
    <svg width="1223" height="16" className="block">
      <rect width="1223" height="16" fill="#c6c6c6" />
      <rect x="82" width="192" height="16" fill="#fff" />
      <rect x="297" width="860" height="16" fill="#fff" />
      {cells.map((i) => {
        const x = zero + i * 18;
        const inch = i % 8 === 0 && i !== 0;
        if (inch) {
          const n = i / 8;
          if (n < 1) return <line key={i} x1={x} x2={x} y1="8" y2="9" stroke="#555" />;
          return <text key={i} x={x} y="12" fontSize="12" textAnchor="middle" fill="#444" fontFamily="'Open Sans'">{n}</text>;
        }
        return i % 4 === 0 ? <line key={i} x1={x} x2={x} y1="4" y2="12" stroke="#666" /> : <line key={i} x1={x} x2={x} y1="7" y2="9" stroke="#666" />;
      })}
      <rect x="70" y="2" width="11" height="12" fill="#9b9b9b" />
      <rect x="284" y="2" width="11" height="12" fill="#9b9b9b" />
      <rect x="1159" y="2" width="11" height="12" fill="#9b9b9b" />
      <path d="M290 0h10l-5 8zM290 16l5-8 5 8z" fill="#f3f3f3" stroke="#888" />
    </svg>
  );
};

type Row = { keys: string; text: React.ReactNode };

const rowsA: Row[] = [
  { keys: 'Ctrl + P', text: 'Show Method Argument' },
  { keys: 'Ctrl + R', text: 'Rename' },
  { keys: 'Ctr + F12', text: 'Find method in class' },
  { keys: 'Ctrl + Space', text: 'Show suggestions' },
  { keys: 'Alt + Enter', text: 'Import class' },
  { keys: 'Alt + Enter', text: 'Correct syntax error as well' },
  { keys: 'Alt + Shift + C', text: 'List of recent changes' },
  { keys: 'Alt + Insert', text: <>Open Getter, Setter, <span className="underline decoration-double decoration-[#2b6cd8]">Constructor ,</span><span className="underline decoration-wavy decoration-red-500">toString(</span>) and Override</> },
  { keys: 'Ctrl + Shift + D', text: 'Search folder class' },
  { keys: 'Ctrl + Shift + F', text: 'Find / Replace in project' },
];

const rowsB: Row[] = [
  { keys: 'Ctrl + Shift + V', text: 'Paste history' },
  { keys: 'Ctrl + Shift + Down', text: 'Move Code line down' },
  { keys: 'Ctrl + Shift + Up', text: 'Move code line up' },
  { keys: 'Ctrl + Shift + Space', text: 'Smart completion' },
  { keys: 'Ctrl + Alt + B', text: 'Open / Navigate to Declaration' },
  { keys: 'Ctrl + Alt + F', text: 'Extract / Assign to a field' },
  { keys: 'Ctrl + Alt + i', text: 'Correct single line indentation in code' },
  { keys: 'Ctrl + Alt + L', text: 'Correct whole file Format' },
  { keys: 'Ctrl + Alt + M', text: 'Extract to method' },
  { keys: 'Ctrl + Alt + T', text: 'Surround With' },
  { keys: 'Ctrl + Alt + V', text: 'Extract / Assign to a variable' },
];

const TableRow = ({ keys, text }: Row) => (
  <div className="flex h-[30.300px] border-b border-black">
    <div className="w-[216px] shrink-0 border-r border-black flex items-center justify-center whitespace-nowrap pt-[2px]">{keys}</div>
    <div className="flex-1 pl-[10px] flex items-center whitespace-nowrap pt-[2px]">
      <span>{text}</span>
    </div>
  </div>
);

const WordDoc = () => (
  <div className="flex-1 min-h-0 flex bg-[#e6e6e6] overflow-hidden">
    <div className="w-[22px] shrink-0 ml-[5px] relative">
      <div className="absolute left-0 w-[17px] top-0 bottom-[10px] bg-white flex flex-col items-center justify-between overflow-hidden">
        <div className="flex-1 flex flex-col items-center justify-around w-full text-[#666]">
          {Array.from({ length: 28 }, (_, i) => <span key={i} className={i % 4 === 0 ? 'w-[8px] h-px bg-[#666]' : 'w-[2px] h-px bg-[#666]'} />)}
        </div>
        <span className="w-full h-[8px] bg-[#c6c6c6]" />
        <span className="w-full h-[10px]" />
      </div>
    </div>
    <div className="ml-[325px] w-[1223px] shrink-0 bg-white pl-[72px] pr-[54px] overflow-hidden text-[20.500px] tracking-[0.800px] text-black font-['Lato',sans-serif]">
      <div className="border-x border-black">
        <div className="flex h-[56px] border-b border-black">
          <div className="w-[216px] shrink-0 border-r border-black" />
          <div className="flex-1 pl-[10px] leading-[29px] whitespace-nowrap">
            <div>start typing the filename, choose from the suggestion list, and then type : followed by</div>
            <div>the line number.</div>
          </div>
        </div>
        {rowsA.map((r, i) => <TableRow key={i} {...r} />)}
        <div className="flex h-[89px] border-b border-black">
          <div className="w-[216px] shrink-0 border-r border-black text-center pt-[1px] leading-[29px]">Ctrl + Shift + N</div>
          <div className="flex-1 pl-[10px] leading-[29px] whitespace-nowrap">
            <div>To open a <b className="text-[#ff0000]">file</b> in the editor at a particular line, press <span className="underline decoration-wavy decoration-red-500">Ctrl+Shift+N</span> (Navigate | <span className="underline decoration-double decoration-[#2b6cd8]">File </span>), start</div>
            <div>typing the filename, choose from the suggestion list, and then type : followed by the</div>
            <div>line number.</div>
          </div>
        </div>
        {rowsB.map((r, i) => <TableRow key={i} {...r} />)}
      </div>
    </div>
  </div>
);

const WordStatus = () => (
  <div className="h-[27px] shrink-0 flex items-center bg-[#f2f2f2] border-t border-[#c6c6c6] text-[13px] text-[#444] font-['Open_Sans',sans-serif] relative">
    <span className="ml-[9px]">Page 1 of 1</span>
    <span className="ml-[26px]">307 words</span>
    <svg viewBox="0 0 18 20" className="ml-[24px] w-[17px] h-[18px]" fill="none" stroke="#777"><path d="M1 1h10v17H1zM14 1h3v17h-3" /><path d="M12 6l4 4M16 6l-4 4" stroke="#555" /></svg>
    <div className="ml-auto flex items-center h-full">
      <svg viewBox="0 0 18 20" className="w-[18px] h-[20px]"><rect x="1" y="1" width="15" height="13" fill="#555" /><circle cx="13" cy="14" r="5" fill="#666" stroke="#f2f2f2" /></svg>
      <span className="ml-[1px] w-[104px]">Display Settings</span>
      <svg viewBox="0 0 20 18" className="ml-[18px] w-[18px] h-[16px]" fill="none" stroke="#666"><path d="M1 1h18v15H1zM10 1v15M3 5h5M3 8h5M3 11h5M12 5h5M12 8h5M12 11h5" /></svg>
      <div className="ml-[16px] w-[50px] h-full bg-[#c6c6c6] flex items-center justify-center"><svg viewBox="0 0 18 20" className="w-[17px] h-[19px]" fill="none" stroke="#555"><path d="M1 1h16v18H1zM3 5h12M3 9h12M3 13h12" /></svg></div>
      <svg viewBox="0 0 18 20" className="ml-[17px] w-[17px] h-[19px]" fill="none" stroke="#666"><path d="M2 1h10l3 3v6M2 1v17h6M4 6h8M4 9h8M4 12h4" /><circle cx="13" cy="15" r="4" fill="#888" /></svg>
      <Minus className="ml-[13px] w-[12px] h-[12px] text-[#555]" />
      <span className="ml-[4px] w-[125px] h-px bg-[#444] relative"><span className="absolute left-[60px] -top-[7px] w-[7px] h-[15px] bg-[#666]" /></span>
      <span className="ml-[5px] text-[18px] leading-none w-[20px]">+</span>
      <span className="ml-[11px] w-[42px]">120%</span>
    </div>
  </div>
);

const ICON = 'block w-[30px] h-[30px]';

const taskIcons: { node: React.ReactNode; active?: boolean; hi?: boolean }[] = [
  { node: <svg viewBox="0 0 30 30" className={ICON}><circle cx="15" cy="15" r="8.500" fill="none" stroke="#fff" strokeWidth="3" /></svg> },
  { node: <svg viewBox="0 0 30 30" className={ICON} fill="none" stroke="#fff" strokeWidth="1.300"><path d="M6 3h14M6 6h14M6 11h12v10H6zM6 26h14M6 29h14" /><path d="M23 11h2v3h-2zM23 18h2v3h-2z" fill="#fff" /></svg> },
  { node: <svg viewBox="0 0 30 30" className={ICON}><path d="M2 15C2 6 9 1 16 1c8 0 13 6 13 13 0 4-3 6-7 6-3 0-6-1-6-3 3 0 5-2 4-5-2-4-9-4-11 1-2 7 3 14 11 14C10 31 2 24 2 15z" fill="#1a84c8" /><path d="M16 1c8 0 13 6 13 13 0 4-3 6-7 6 1-9-6-14-13-13 2-3 4-6 7-6z" fill="#5bd07f" /></svg> },
  { node: <svg viewBox="0 0 30 30" className={ICON}><path d="M2 3h10l3 4h13v22H2z" fill="#f7c948" /><rect x="2" y="8" width="26" height="21" fill="#fbd95d" /><rect x="10" y="21" width="10" height="8" fill="#2f8fd8" /><rect x="13" y="25" width="4" height="4" fill="#fbd95d" /></svg> },
  { active: true, hi: true, node: <svg viewBox="0 0 30 30" className={ICON}><circle cx="15" cy="15" r="14" fill="#e94235" /><path d="M15 15L3 8A14 14 0 0015 29z" fill="#34a853" /><path d="M15 15h14a14 14 0 01-14 14l-2-1z" fill="#fbbc05" /><circle cx="15" cy="15" r="6.500" fill="#4285f4" stroke="#fff" strokeWidth="2" /></svg> },
  { active: true, node: <svg viewBox="0 0 30 30" className={ICON}><rect x="6" y="1" width="22" height="28" rx="2" fill="#2b7cd3" /><rect x="6" y="1" width="22" height="8" fill="#41a5ee" /><rect x="6" y="20" width="22" height="9" fill="#185abd" /><rect x="1" y="8" width="15" height="15" rx="1" fill="#1a4fa0" /><text x="8.500" y="20" textAnchor="middle" fontSize="12" fill="#fff" fontWeight="700" fontFamily="'Liberation Sans'">W</text></svg> },
  { node: <svg viewBox="0 0 30 30" className={ICON}><rect x="6" y="1" width="22" height="28" rx="2" fill="#21a366" /><rect x="17" y="1" width="11" height="14" fill="#33c481" /><rect x="6" y="15" width="11" height="14" fill="#185c37" /><rect x="1" y="8" width="15" height="15" rx="1" fill="#107c41" /><text x="8.500" y="20" textAnchor="middle" fontSize="12" fill="#fff" fontWeight="700" fontFamily="'Liberation Sans'">X</text></svg> },
  { node: <svg viewBox="0 0 30 30" className={ICON}><rect x="2" y="1" width="26" height="28" rx="2" fill="#0c1420" /><path d="M8 24c4-3 8-14 6-19-1-2 3-2 2 2 0 6 4 10 8 12-5 0-12 1-16 5z" fill="none" stroke="#e8e8ec" strokeWidth="1.800" /></svg> },
  { node: <svg viewBox="0 0 30 30" className={ICON}><path d="M14 1l8 8v14l-8 7-9-3V9z" fill="#1859a8" /><path d="M22 9l6 4v8l-6 4z" fill="#2b7cd3" /><rect x="1" y="9" width="15" height="15" rx="1" fill="#2b7cd3" /><text x="8.500" y="21" textAnchor="middle" fontSize="12" fill="#fff" fontWeight="700" fontFamily="'Liberation Sans'">V</text></svg> },
  { node: <svg viewBox="0 0 30 30" className={ICON}><rect x="2" y="4" width="26" height="26" rx="2" fill="#2196e3" /><rect x="6" y="0" width="3" height="8" fill="#2196e3" /><rect x="21" y="0" width="3" height="8" fill="#2196e3" /><g fill="#fff">{[0, 1, 2, 3].map((r) => [0, 1, 2, 3].map((c) => <rect key={`${r}${c}`} x={7 + c * 4.500} y={12 + r * 4.200} width="2.500" height="2.500" />))}</g></svg> },
  { active: true, node: <svg viewBox="0 0 30 30" className={ICON}><rect x="3" y="0" width="24" height="30" rx="2" fill="#ffd500" /><path d="M27 12v16l-1 2H13l3-13c2-4 6-5 11-5z" fill="#4b4b4b" /></svg> },
  { active: true, node: <svg viewBox="0 0 30 30" className={ICON}><rect x="4" y="0" width="22" height="30" rx="2" fill="#6a7b85" /><rect x="7" y="3" width="16" height="6" fill="#50c8e8" /><g fill="#d5d9dc"><rect x="7" y="11" width="5" height="5" /><rect x="13" y="11" width="5" height="5" /><rect x="19" y="11" width="4" height="5" /><rect x="7" y="17" width="5" height="5" /><rect x="7" y="23" width="5" height="5" /></g><rect x="13" y="17" width="10" height="11" fill="#1f4f78" /></svg> },
  { active: true, node: <svg viewBox="0 0 30 30" className={ICON}><rect x="1" y="1" width="28" height="28" fill="#e03d7a" /><path d="M16 1h13v28H8z" fill="#2e7ad8" /><rect x="5" y="5" width="20" height="20" fill="#0b0b0f" /><text x="8" y="17" fontSize="10" fontWeight="700" fill="#fff" fontFamily="'Liberation Sans'">IJ</text><rect x="8" y="20" width="8" height="1.500" fill="#fff" /></svg> },
];

const Taskbar = () => (
  <div className="h-[50px] shrink-0 flex items-stretch bg-[#1f2c34] relative text-white font-['Open_Sans',sans-serif]">
    <div className="w-[60px] flex items-center justify-center">
      <svg viewBox="0 0 22 22" className="w-[21px] h-[21px]" fill="#fff"><path d="M0 3l9-1.300V10H0zM10 1.500L22 0v10H10zM0 11h9v8.500L0 18zM10 11h12v11l-12-1.700z" /></svg>
    </div>
    <div className="w-[429px] bg-[#f2f2f2] flex items-center text-[#222] text-[16.500px] border border-[#8a9499]">
      <Search className="ml-[13px] w-[22px] h-[24px] -scale-x-100 text-[#222]" strokeWidth={1.300} />
      <span className="ml-[12px]">Type here to search</span>
    </div>
    {taskIcons.map((t, i) => (
      <div key={i} className={`w-[62px] flex flex-col ${t.hi ? 'bg-[#4c5b62]' : ''}`}>
        <div className="flex-1 flex items-center justify-center">{t.node}</div>
        <div className={`h-[3px] mx-[3px] ${t.active ? 'bg-[#76b9ed]' : ''}`} />
      </div>
    ))}
    <div className="absolute right-[515px] top-[9px]">
      <svg viewBox="0 0 30 32" className="w-[30px] h-[32px]"><circle cx="14" cy="15" r="13" fill="#fff" /><circle cx="14" cy="15" r="10" fill="#1a84d8" /><text x="14" y="21" textAnchor="middle" fontSize="17" fontWeight="700" fill="#fff" fontFamily="'Liberation Sans'">?</text><circle cx="24" cy="25" r="6" fill="#0e78c8" stroke="#fff" /></svg>
    </div>
    <div className="ml-auto flex items-center h-full">
      <span className="w-[23px] h-[32px] rounded-full bg-gradient-to-br from-[#ffd65c] to-[#f29a12]" />
      <span className="ml-[14px] w-[38px] text-[16px]">61°F</span>
      <ChevronUp className="ml-[20px] w-[22px] h-[22px]" strokeWidth={1.300} />
      <svg viewBox="0 0 16 26" className="ml-[22px] w-[14px] h-[24px]" fill="none" stroke="#fff" strokeWidth="1.300"><path d="M3 5h10v16H3zM5 2h6M5 24h6" /></svg>
      <svg viewBox="0 0 24 18" className="ml-[12px] w-[22px] h-[17px]" fill="#e6e9eb"><path d="M6 17a5 5 0 010-10 7 7 0 0113 1 4.500 4.500 0 010 9z" /></svg>
      <svg viewBox="0 0 22 16" className="ml-[29px] w-[21px] h-[15px]"><rect x="1" y="1" width="18" height="14" fill="#fff" stroke="#fff" /><rect x="15" y="3" width="3" height="10" fill="#1f2c34" /><rect x="20" y="5" width="2" height="6" fill="#fff" /></svg>
      <svg viewBox="0 0 22 22" className="ml-[18px] w-[22px] h-[22px]" fill="none" stroke="#d6dadd" strokeWidth="1.300"><path d="M2 20C2 10 10 2 20 2M7 20c0-7 6-13 13-13M12 20c0-4 4-8 8-8" /></svg>
      <svg viewBox="0 0 24 26" className="ml-[15px] w-[24px] h-[25px]" fill="none" stroke="#d6dadd" strokeWidth="1.100"><path d="M2 9h4l6-6v20l-6-6H2zM16 8c2 3 2 7 0 10M20 5c3 5 3 11 0 16" /></svg>
      <div className="ml-[20px] w-[64px] flex flex-col items-center text-[14px] leading-[24px]"><span className="whitespace-nowrap">2:18 PM</span><span className="whitespace-nowrap">11/30/2021</span></div>
      <svg viewBox="0 0 22 24" className="ml-[34px] mr-[22px] w-[20px] h-[24px]" fill="none" stroke="#fff" strokeWidth="1.300"><path d="M1 1h20v17h-4l-4 5-1-5H1z" /></svg>
    </div>
  </div>
);

const WordSide = () => (
  <div className="w-[1920px] shrink-0 h-full flex flex-col font-['Open_Sans',sans-serif]">
    <WordTitleBar />
    <WordTabs />
    <Ribbon />
    <div className="h-[30px] shrink-0 flex bg-[#e6e6e6] pt-[5px]">
      <div className="ml-[5px] w-[20px] h-[22px] bg-white border-[2px] border-[#d4d4d4] flex items-end justify-center pb-[3px]"><span className="w-[8px] h-[8px] border-l-2 border-b-2 border-[#666]" /></div>
      <div className="ml-[327px]"><WordRuler /></div>
    </div>
    <WordDoc />
    <WordStatus />
    <Taskbar />
  </div>
);

export default function App() {
  return (
    <div className="w-[3840px] h-[1080px] flex overflow-hidden bg-[#1c1c1c]">
      <div className="w-[96px] shrink-0 bg-[#0c0c0c]" />
      <MacSide />
      <div className="w-[96px] shrink-0 bg-[#1c1c1c]" />
      <WordSide />
    </div>
  );
}
